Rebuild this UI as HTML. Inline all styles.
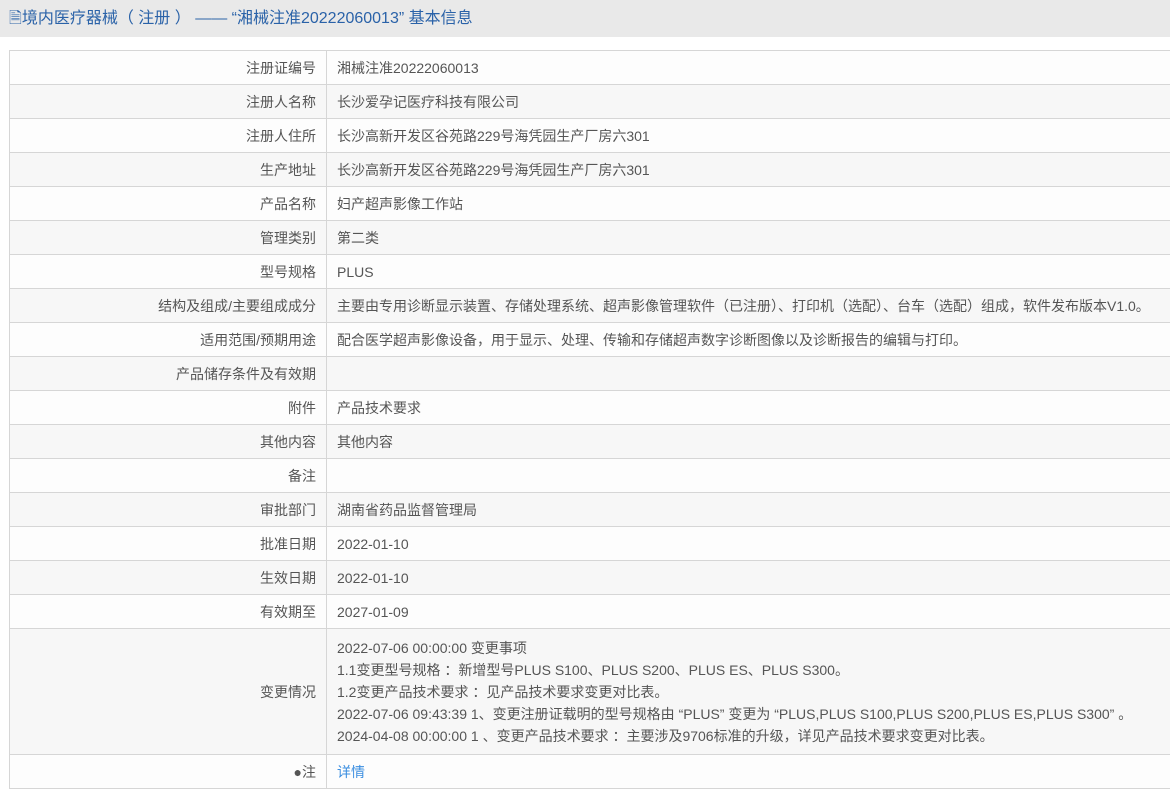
<!DOCTYPE html>
<html><head><meta charset="utf-8"><style>
body{margin:0;width:1170px;height:784px;overflow:hidden;background:#fff;font-family:"Liberation Sans","Noto Sans CJK SC",sans-serif;font-size:14px;color:#555}
.hd{height:37px;background:#e9e9e9;color:#2a62a8;font-size:16px;line-height:37px;padding-left:9px;white-space:pre}
table{position:absolute;left:9px;top:50px;border-collapse:collapse;width:1180px}
td{border:1px solid #d6d6d6;height:33px;padding:0 10px;line-height:22px}
td.l{width:296px;text-align:right}
tr:nth-child(even) td{background:#f7f7f7}
tr:nth-child(odd) td{background:#fdfdfd}
.m td{height:125px}
a{color:#3b8ee0;text-decoration:none}
</style></head><body>
<div class="hd">🗎境内医疗器械（ 注册 ） —— “湘械注准20222060013” 基本信息</div>
<table>
<tr><td class="l">注册证编号</td><td>湘械注准20222060013</td></tr>
<tr><td class="l">注册人名称</td><td>长沙爱孕记医疗科技有限公司</td></tr>
<tr><td class="l">注册人住所</td><td>长沙高新开发区谷苑路229号海凭园生产厂房六301</td></tr>
<tr><td class="l">生产地址</td><td>长沙高新开发区谷苑路229号海凭园生产厂房六301</td></tr>
<tr><td class="l">产品名称</td><td>妇产超声影像工作站</td></tr>
<tr><td class="l">管理类别</td><td>第二类</td></tr>
<tr><td class="l">型号规格</td><td>PLUS</td></tr>
<tr><td class="l">结构及组成/主要组成成分</td><td>主要由专用诊断显示装置、存储处理系统、超声影像管理软件（已注册）、打印机（选配）、台车（选配）组成，软件发布版本V1.0。</td></tr>
<tr><td class="l">适用范围/预期用途</td><td>配合医学超声影像设备，用于显示、处理、传输和存储超声数字诊断图像以及诊断报告的编辑与打印。</td></tr>
<tr><td class="l">产品储存条件及有效期</td><td></td></tr>
<tr><td class="l">附件</td><td>产品技术要求</td></tr>
<tr><td class="l">其他内容</td><td>其他内容</td></tr>
<tr><td class="l">备注</td><td></td></tr>
<tr><td class="l">审批部门</td><td>湖南省药品监督管理局</td></tr>
<tr><td class="l">批准日期</td><td>2022-01-10</td></tr>
<tr><td class="l">生效日期</td><td>2022-01-10</td></tr>
<tr><td class="l">有效期至</td><td>2027-01-09</td></tr>
<tr class="m"><td class="l">变更情况</td><td>2022-07-06 00:00:00 变更事项<br>1.1变更型号规格 ：新增型号PLUS S100、PLUS S200、PLUS ES、PLUS S300。<br>1.2变更产品技术要求 ：见产品技术要求变更对比表。<br>2022-07-06 09:43:39 1、变更注册证载明的型号规格由 “PLUS” 变更为 “PLUS,PLUS S100,PLUS S200,PLUS ES,PLUS S300” 。<br>2024-04-08 00:00:00 1 、变更产品技术要求 ：主要涉及9706标准的升级，详见产品技术要求变更对比表。</td></tr>
<tr><td class="l">●注</td><td><a>详情</a></td></tr>
</table>
</body></html>
